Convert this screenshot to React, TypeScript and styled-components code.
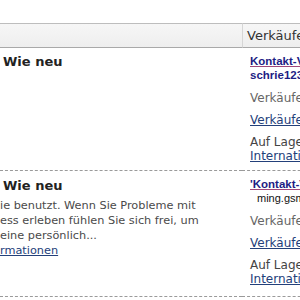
import styled, { createGlobalStyle } from 'styled-components';

const GlobalStyle = createGlobalStyle`
    html, body {
        margin: 0;
        padding: 0;
        background: #ffffff;
        overflow: hidden;
    }
    body {
        font-family: "DejaVu Sans", Verdana, sans-serif;
        color: #333333;
    }
`;

const Page = styled.div`
    padding-top: 23px;
    width: 402px;
`;

const Table = styled.div`
    display: grid;
    grid-template-columns: 242px 160px;
`;

const HeadCell = styled.div<{ $divider?: boolean }>`
    height: 23px;
    background: linear-gradient(#f6f6f6, #eeeeee);
    border-top: 1px solid #bdbdbd;
    border-bottom: 1px solid #a9a9a9;
    border-left: ${({ $divider }) => ($divider ? '1px solid #d6d6d6' : 'none')};
    padding-left: ${({ $divider }) => ($divider ? '4px' : '0')};
    font-size: 13px;
    line-height: 23px;
    color: #333333;
    white-space: nowrap;
`;

const Cell = styled.div<{ $seller?: boolean; $top: number }>`
    border-bottom: 1px dashed #9a9a9a;
    padding-top: ${({ $top }) => $top}px;
    padding-left: ${({ $seller }) => ($seller ? '8px' : '3px')};
    display: flex;
    flex-direction: column;
    white-space: nowrap;
`;

const Condition = styled.div`
    font-size: 13px;
    line-height: 16px;
    font-weight: bold;
    color: #222222;
`;

const Desc = styled.div`
    margin-top: 4px;
    margin-left: -3px;
    font-size: 11.3px;
    line-height: 15px;
    color: #4a4a4a;
`;

const SellerName = styled.a`
    font-family: "Liberation Sans", Arial, sans-serif;
    font-size: 11.5px;
    line-height: 14px;
    font-weight: bold;
    color: #1d1d84;
    text-decoration: underline;
    text-decoration-color: #a0487a;
`;

const SellerId = styled.div<{ $plain?: boolean }>`
    font-family: "Liberation Sans", Arial, sans-serif;
    font-size: ${({ $plain }) => ($plain ? '11px' : '11.5px')};
    line-height: 14px;
    font-weight: ${({ $plain }) => ($plain ? 'normal' : 'bold')};
    color: ${({ $plain }) => ($plain ? '#111111' : '#1d1d84')};
    padding-left: ${({ $plain }) => ($plain ? '7px' : '0')};
`;

const Info = styled.div<{ $gap?: number }>`
    margin-top: ${({ $gap }) => $gap ?? 0}px;
    font-size: 12px;
    line-height: 14px;
    color: #666666;
`;

const Stock = styled(Info)`
    color: #444444;
`;

const Link = styled.a<{ $gap?: number; $bottom?: number }>`
    display: block;
    margin-top: ${({ $gap }) => $gap ?? 0}px;
    margin-bottom: ${({ $bottom }) => $bottom ?? 0}px;
    font-size: 12px;
    line-height: 14px;
    color: #23407a;
    text-decoration: underline;
`;

const DescLink = styled.a`
    color: #23407a;
    text-decoration: underline;
`;

function Seller({ name, id, plain, bottom }: { name: string; id: string; plain?: boolean; bottom: number }) {
    return (
        <>
            <SellerName href="#">{name}</SellerName>
            <SellerId $plain={plain}>{id}</SellerId>
            <Info $gap={9}>Verkäufer-Bewertung: 99,8%</Info>
            <Link href="#" $gap={8}>Verkäufer kontaktieren</Link>
            <Stock $gap={8}>Auf Lager: 12</Stock>
            <Link href="#" $bottom={bottom}>Internationaler Versand</Link>
        </>
    );
}

export default function App() {
    return (
        <Page>
            <GlobalStyle />
            <Table>
                <HeadCell />
                <HeadCell $divider>Verkäufer</HeadCell>

                <Cell $top={6}>
                    <Condition>Wie neu</Condition>
                </Cell>
                <Cell $seller $top={6}>
                    <Seller name="Kontakt-Verkäufer" id="schrie1234 (58)" bottom={7} />
                </Cell>

                <Cell $top={7}>
                    <Condition>Wie neu</Condition>
                    <Desc>
                        ie benutzt. Wenn Sie Probleme mit<br />
                        ess erleben fühlen Sie sich frei, um<br />
                        eine persönlich...<br />
                        <DescLink href="#">rmationen</DescLink>
                    </Desc>
                </Cell>
                <Cell $seller $top={6}>
                    <Seller name="'Kontakt-Verkäufer'" id="ming.gsmshop" plain bottom={10} />
                </Cell>
            </Table>
        </Page>
    );
}
